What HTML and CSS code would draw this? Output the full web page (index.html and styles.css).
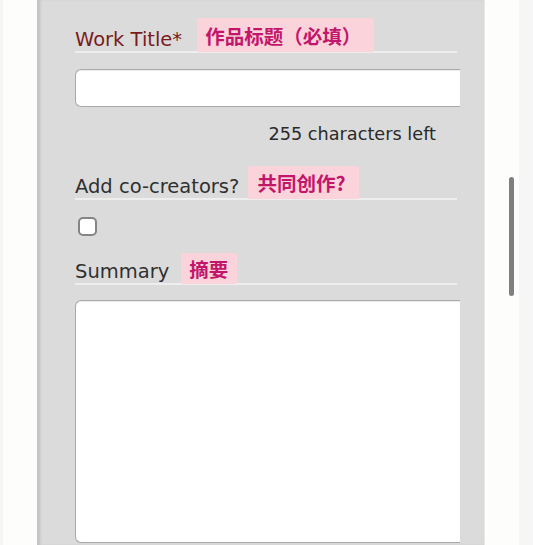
FILE: index.html
```html
<!DOCTYPE html>
<html lang="en">
<head>
<meta charset="utf-8">
<title>Work form</title>
<link rel="stylesheet" href="styles.css">
</head>
<body>
<div class="page">
  <div class="edge"></div>
  <div class="gutter"></div>
  <main class="panel">
    <div class="label-row">
      <span class="label label-required">Work Title*</span>
      <span class="tag tag-title">作品标题（必填）</span>
    </div>
    <div class="input-wrap"><input class="text-input" type="text"></div>
    <div class="help">255 characters left</div>
    <div class="label-row row-co">
      <span class="label">Add co-creators?</span>
      <span class="tag tag-co">共同创作?</span>
    </div>
    <div class="check-wrap"><input class="check" type="checkbox"></div>
    <div class="label-row row-summary">
      <span class="label">Summary</span>
      <span class="tag tag-summary">摘要</span>
    </div>
    <textarea class="summary"></textarea>
  </main>
  <div class="gutter"></div>
  <div class="edge-right"></div>
</div>
<div class="scrollbar"></div>
</body>
</html>
```
FILE: styles.css
```css
html, body {
  margin: 0;
  padding: 0;
  height: 545px;
  overflow: hidden;
  background: #fdfdfc;
}

.page {
  display: grid;
  grid-template-columns: 3px 34px 448px 34px 14px;
  height: 545px;
}

.edge {
  background: #f5f5f5;
}

.edge-right {
  background: #f6f6f6;
}

.gutter {
  background: #fdfdfb;
}

.panel {
  background: #dbdbdb;
  box-shadow: inset 4px 0 3px -1px rgba(0, 0, 0, 0.12);
  border-right: 1px solid #e9e9e9;
  padding: 18px 25px 0 38px;
  display: flex;
  flex-direction: column;
  font-family: "DejaVu Sans", Verdana, sans-serif;
}

.label-row {
  display: flex;
  align-items: flex-end;
  height: 33px;
  border-bottom: 2px solid #eeeeee;
  margin-right: 2px;
}

.row-co {
  height: 32px;
  margin-top: 21px;
}

.row-summary {
  height: 30px;
  margin-top: 17px;
}

.label {
  font-size: 19.5px;
  line-height: 22px;
  color: #303030;
  white-space: nowrap;
}

.label-required {
  color: #7a1c1c;
}

.tag {
  align-self: stretch;
  display: flex;
  align-items: center;
  background: #fbd3db;
  color: #c2166b;
  font-family: "Noto Sans CJK SC", "Noto Sans", sans-serif;
  font-weight: 700;
  font-size: 19.5px;
  border-radius: 2px;
  white-space: nowrap;
  margin-bottom: -1px;
}

.tag-title {
  margin-left: 15px;
  padding: 0 13px 0 8px;
}

.tag-co {
  margin-left: 9px;
  padding: 0 14px 0 9px;
}

.tag-summary {
  margin-left: 12px;
  padding: 0 9px 0 8px;
}

.input-wrap {
  margin-top: 16px;
  height: 38px;
}

.text-input {
  display: block;
  box-sizing: border-box;
  width: 385px;
  height: 38px;
  margin: 0;
  border: 1px solid #a9a9a9;
  border-right: none;
  border-radius: 6px 0 0 6px;
  background: #ffffff;
  box-shadow: inset 0 1px 1px rgba(0, 0, 0, 0.08);
}

.help {
  margin-top: 16px;
  text-align: right;
  padding-right: 23px;
  font-size: 17.7px;
  line-height: 22px;
  color: #2a2a2a;
}

.check-wrap {
  margin-top: 17px;
  height: 19px;
  padding-left: 3px;
}

.check {
  appearance: none;
  -webkit-appearance: none;
  display: block;
  margin: 0;
  width: 19px;
  height: 19px;
  box-sizing: border-box;
  border: 2px solid #858585;
  border-radius: 5px;
  background: #ffffff;
}

.summary {
  display: block;
  box-sizing: border-box;
  margin: 15px 0 0 0;
  width: 385px;
  height: 243px;
  border: 1px solid #a9a9a9;
  border-right: none;
  border-radius: 6px 0 0 6px;
  background: #ffffff;
  resize: none;
  box-shadow: inset 0 1px 1px rgba(0, 0, 0, 0.08);
}

.scrollbar {
  position: absolute;
  left: 509px;
  top: 177px;
  width: 5px;
  height: 119px;
  border-radius: 3px;
  background: #7f7f7f;
}
```
